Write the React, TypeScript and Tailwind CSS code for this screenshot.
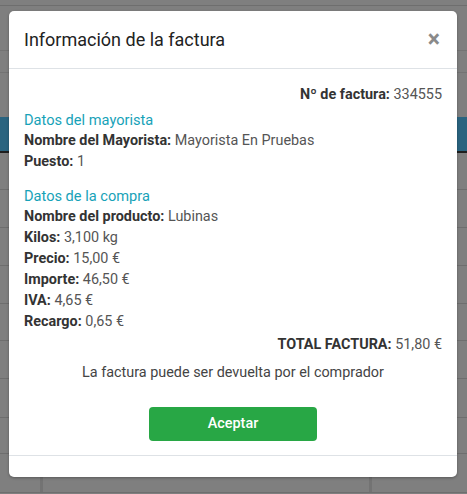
import React from "react";

const rows = [37, 38, 38, 38, 37, 38, 39, 36, 39];

function Row({ label, value }: { label: string; value: string }) {
  return (
    <div className="leading-[21px]">
      <span className="font-bold text-[#333]">{label}</span> <span className="text-[#555]">{value}</span>
    </div>
  );
}

export default function App() {
  return (
    <div className="relative h-[494px] w-[467px] overflow-hidden bg-[#7f7f7f] font-['Roboto',_'Liberation_Sans',_sans-serif]">
      {/* page behind the overlay */}
      <div className="flex flex-col">
        <div className="h-[6px] border-b border-[#6e6e6e]" />
        <div className="h-[45px] border-b border-[#737373]" />
        <div className="h-[22px] border-b border-[#737373]" />
        <div className="h-[44px]" />
        <div className="h-[36px] border-b-2 border-[#1e1e1e] bg-[#2a6480]" />
        {rows.map((h, i) => (
          <div key={i} style={{ height: h }} className="flex border-b border-[#6e6e6e]">
            <div className="w-[43px] border-r-[3px] border-[#737373]" />
            <div className="w-[329px] border-r-[3px] border-[#737373]" />
            <div className="flex-1" />
          </div>
        ))}
      </div>

      {/* modal */}
      <div className="absolute left-[9px] top-[11px] flex w-[448px] flex-col rounded-[5px] bg-white shadow-[0_1px_3px_rgba(0,0,0,0.3)]">
        <div className="flex items-center justify-between border-b border-[#dee2e6] px-[15px] pb-[16px] pt-[16px]">
          <h5 className="text-[18px] leading-[25px] text-[#222]">Información de la factura</h5>
          <span className="mr-[2px] text-[23px] font-bold leading-none text-[#8a8a8a]">×</span>
        </div>

        <div className="px-[15px] pt-[15px] text-[14.4px]">
          <div className="text-right leading-[21px]">
            <span className="font-bold text-[#333]">Nº de factura:</span> <span className="text-[#555]">334555</span>
          </div>

          <div className="mt-[5px] text-[14.6px] leading-[20px] text-[#17a2b8]">Datos del mayorista</div>
          <Row label="Nombre del Mayorista:" value="Mayorista En Pruebas" />
          <Row label="Puesto:" value="1" />

          <div className="mt-[14px] text-[14.6px] leading-[20px] text-[#17a2b8]">Datos de la compra</div>
          <Row label="Nombre del producto:" value="Lubinas" />
          <Row label="Kilos:" value="3,100 kg" />
          <Row label="Precio:" value="15,00 €" />
          <Row label="Importe:" value="46,50 €" />
          <Row label="IVA:" value="4,65 €" />
          <Row label="Recargo:" value="0,65 €" />

          <div className="mt-[2px] text-right leading-[21px]">
            <span className="font-bold text-[#333]">TOTAL FACTURA:</span> <span className="text-[#555]">51,80 €</span>
          </div>

          <p className="mt-[7px] text-center leading-[21px] text-[#444]">La factura puede ser devuelta por el comprador</p>

          <div className="flex justify-center pb-[14px] pt-[24px]">
            <button className="h-[34px] w-[168px] rounded-[4px] bg-[#28a745] text-[14.4px] font-medium text-white">
              Aceptar
            </button>
          </div>
        </div>

        <div className="h-[22px] border-t border-[#dee2e6]" />
      </div>
    </div>
  );
}
